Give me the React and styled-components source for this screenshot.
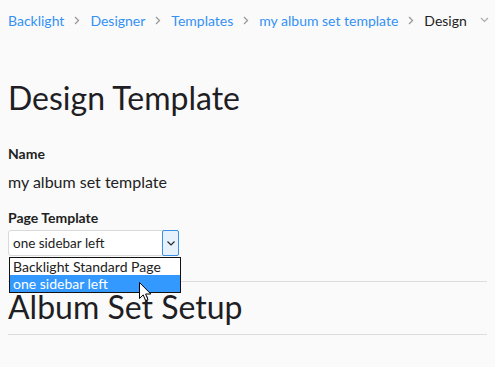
import React from "react";
import styled, { createGlobalStyle } from "styled-components";

const Global = createGlobalStyle`
  html, body { margin: 0; padding: 0; background: #fafafa; }
  body { font-family: Lato, "Open Sans", sans-serif; color: #222; }
`;

const Page = styled.div`
  padding: 0 8px;
  width: 495px;
  box-sizing: border-box;
  overflow: hidden;
  height: 367px;
`;

const Crumbs = styled.nav`
  display: flex;
  align-items: center;
  height: 40px;
  font-size: 14px;
  white-space: nowrap;
`;

const Crumb = styled.a`
  color: ${(p) => (p.$current ? "#222" : "#3391f5")};
  text-decoration: none;
`;

const Sep = styled.span`
  display: inline-flex;
  align-items: center;
  margin: 0 ${(p) => p.$gap || 10}px;
  color: #999;
`;

const H1 = styled.h1`
  margin: 38px 0 0;
  font-size: 32px;
  font-weight: 400;
  line-height: 40px;
  color: #1e1e24;
`;

const Label = styled.div`
  margin-top: ${(p) => p.$top}px;
  font-size: 14px;
  font-weight: 700;
  line-height: 16px;
  color: #222;
`;

const Value = styled.div`
  margin-top: 10px;
  font-size: 16px;
  line-height: 19px;
`;

const SelectWrap = styled.div`
  position: relative;
  margin-top: 4px;
  width: 171px;
`;

const SelectBox = styled.div`
  display: flex;
  height: 26px;
  box-sizing: border-box;
  border: 1px solid #d9d9d9;
  border-radius: 3px;
  background: #fff;
  font-size: 13.5px;
`;

const SelectText = styled.div`
  flex: 1;
  display: flex;
  align-items: center;
  padding-left: 4px;
  color: #222;
`;

const ArrowBtn = styled.div`
  width: 17px;
  box-sizing: border-box;
  border: 1px solid #3c8fe6;
  border-radius: 2px;
  background: #e5f1fb;
  display: flex;
  align-items: center;
  justify-content: center;
  margin: -1px -1px -1px 0;
`;

const ListBox = styled.ul`
  position: absolute;
  top: 27px;
  left: 1px;
  width: 172px;
  margin: 0;
  padding: 0;
  list-style: none;
  border: 1px solid #111;
  background: #fff;
  box-sizing: border-box;
  z-index: 2;
  font-size: 14px;
`;

const Option = styled.li`
  height: 17px;
  line-height: 17px;
  padding-left: 3px;
  white-space: nowrap;
  background: ${(p) => (p.$active ? "#3399ff" : "#fff")};
  color: ${(p) => (p.$active ? "#fff" : "#222")};
`;

const Cursor = styled.svg`
  position: absolute;
  left: 131px;
  top: 52px;
  z-index: 3;
`;

const Section = styled.div`
  margin-top: 25px;
  border-top: 1px solid #ddd;
`;

const H2 = styled.h2`
  margin: 0;
  padding-top: 5px;
  font-size: 32px;
  font-weight: 400;
  line-height: 40px;
  color: #1e1e24;
  border-bottom: 1px solid #ddd;
  padding-bottom: 7px;
`;

const Chev = () => (
  <svg width="6" height="9" viewBox="0 0 6 9">
    <path d="M1 1l3.5 3.5L1 8" fill="none" stroke="#999" strokeWidth="1.3" />
  </svg>
);

export default function App() {
  const crumbs = ["Backlight", "Designer", "Templates", "my album set template"];
  return (
    <>
      <Global />
      <Page>
        <Crumbs>
          {crumbs.map((c) => (
            <React.Fragment key={c}>
              <Crumb href="#">{c}</Crumb>
              <Sep>
                <Chev />
              </Sep>
            </React.Fragment>
          ))}
          <Crumb $current>Design</Crumb>
          <Sep $gap={13}>
            <svg width="9" height="6" viewBox="0 0 9 6">
              <path d="M1 1l3.5 3.5L8 1" fill="none" stroke="#aaa" strokeWidth="1.2" />
            </svg>
          </Sep>
        </Crumbs>
        <H1>Design Template</H1>
        <Label $top={28}>Name</Label>
        <Value>my album set template</Value>
        <Label $top={19}>Page Template</Label>
        <SelectWrap>
          <SelectBox>
            <SelectText>one sidebar left</SelectText>
            <ArrowBtn>
              <svg width="8" height="5" viewBox="0 0 8 5">
                <path d="M0.5 0.5L4 4L7.5 0.5" fill="none" stroke="#222" strokeWidth="1.1" />
              </svg>
            </ArrowBtn>
          </SelectBox>
          <ListBox>
            <Option>Backlight Standard Page</Option>
            <Option $active>one sidebar left</Option>
          </ListBox>
          <Cursor width="13" height="20" viewBox="0 0 13 20">
            <path
              d="M0.5 0.5V16.5L4.2 12.9L6.6 18.6L9 17.6L6.6 12H11.8Z"
              fill="#fff"
              stroke="#000"
              strokeWidth="1"
              strokeLinejoin="miter"
            />
          </Cursor>
        </SelectWrap>
        <Section>
          <H2>Album Set Setup</H2>
        </Section>
      </Page>
    </>
  );
}
